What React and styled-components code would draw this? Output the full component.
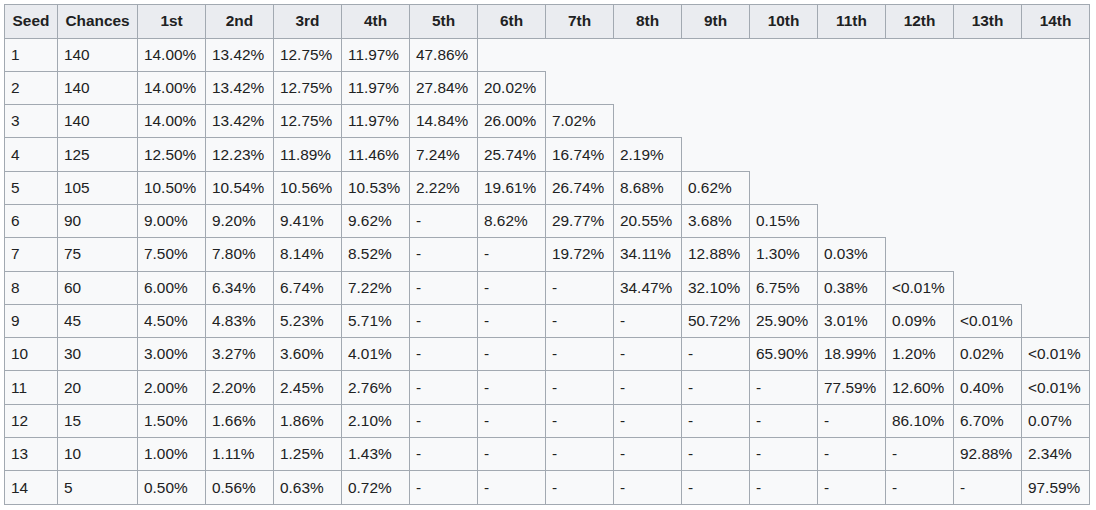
import React from 'react';
import styled, { createGlobalStyle } from 'styled-components';

const GlobalStyle = createGlobalStyle`
  html, body {
    margin: 0;
    padding: 0;
    background: #fff;
  }
`;

const headers = ["Seed", "Chances", "1st", "2nd", "3rd", "4th", "5th", "6th", "7th", "8th", "9th", "10th", "11th", "12th", "13th", "14th"];

const rows = [
  ["1", "140", "14.00%", "13.42%", "12.75%", "11.97%", "47.86%"],
  ["2", "140", "14.00%", "13.42%", "12.75%", "11.97%", "27.84%", "20.02%"],
  ["3", "140", "14.00%", "13.42%", "12.75%", "11.97%", "14.84%", "26.00%", "7.02%"],
  ["4", "125", "12.50%", "12.23%", "11.89%", "11.46%", "7.24%", "25.74%", "16.74%", "2.19%"],
  ["5", "105", "10.50%", "10.54%", "10.56%", "10.53%", "2.22%", "19.61%", "26.74%", "8.68%", "0.62%"],
  ["6", "90", "9.00%", "9.20%", "9.41%", "9.62%", "-", "8.62%", "29.77%", "20.55%", "3.68%", "0.15%"],
  ["7", "75", "7.50%", "7.80%", "8.14%", "8.52%", "-", "-", "19.72%", "34.11%", "12.88%", "1.30%", "0.03%"],
  ["8", "60", "6.00%", "6.34%", "6.74%", "7.22%", "-", "-", "-", "34.47%", "32.10%", "6.75%", "0.38%", "<0.01%"],
  ["9", "45", "4.50%", "4.83%", "5.23%", "5.71%", "-", "-", "-", "-", "50.72%", "25.90%", "3.01%", "0.09%", "<0.01%"],
  ["10", "30", "3.00%", "3.27%", "3.60%", "4.01%", "-", "-", "-", "-", "-", "65.90%", "18.99%", "1.20%", "0.02%", "<0.01%"],
  ["11", "20", "2.00%", "2.20%", "2.45%", "2.76%", "-", "-", "-", "-", "-", "-", "77.59%", "12.60%", "0.40%", "<0.01%"],
  ["12", "15", "1.50%", "1.66%", "1.86%", "2.10%", "-", "-", "-", "-", "-", "-", "-", "86.10%", "6.70%", "0.07%"],
  ["13", "10", "1.00%", "1.11%", "1.25%", "1.43%", "-", "-", "-", "-", "-", "-", "-", "-", "92.88%", "2.34%"],
  ["14", "5", "0.50%", "0.56%", "0.63%", "0.72%", "-", "-", "-", "-", "-", "-", "-", "-", "-", "97.59%"],
];

const Page = styled.div`
  padding: 4px;
`;

const Table = styled.table`
  border-collapse: collapse;
  table-layout: fixed;
  width: 1086px;
  background: #f8f9fa;
  border: 1px solid #a2a9b1;
  color: #202122;
  font: 15.4px "Liberation Sans", Arial, sans-serif;
`;

const Col = styled.col`
  width: ${(p) => p.$w}px;
`;

const HeadCell = styled.th`
  background: #eaecf0;
  border: 1px solid #a2a9b1;
  font-weight: bold;
  text-align: center;
  padding: 0 6px;
  height: 32.5px;
  white-space: nowrap;
`;

const Cell = styled.td`
  border: 1px solid #a2a9b1;
  text-align: left;
  padding: 0 6px;
  height: 32.3px;
  white-space: nowrap;
`;

const EmptyCell = styled.td`
  border: none;
  padding: 0;
`;

export default function App() {
  return (
    <Page>
      <GlobalStyle />
      <Table>
        <colgroup>
          {headers.map((h, i) => (
            <Col key={h} $w={i === 0 ? 53 : i === 1 ? 80 : 68} />
          ))}
        </colgroup>
        <thead>
          <tr>
            {headers.map((h) => (
              <HeadCell key={h}>{h}</HeadCell>
            ))}
          </tr>
        </thead>
        <tbody>
          {rows.map((r) => (
            <tr key={r[0]}>
              {headers.map((h, i) =>
                i < r.length ? <Cell key={h}>{r[i]}</Cell> : <EmptyCell key={h} />
              )}
            </tr>
          ))}
        </tbody>
      </Table>
    </Page>
  );
}
